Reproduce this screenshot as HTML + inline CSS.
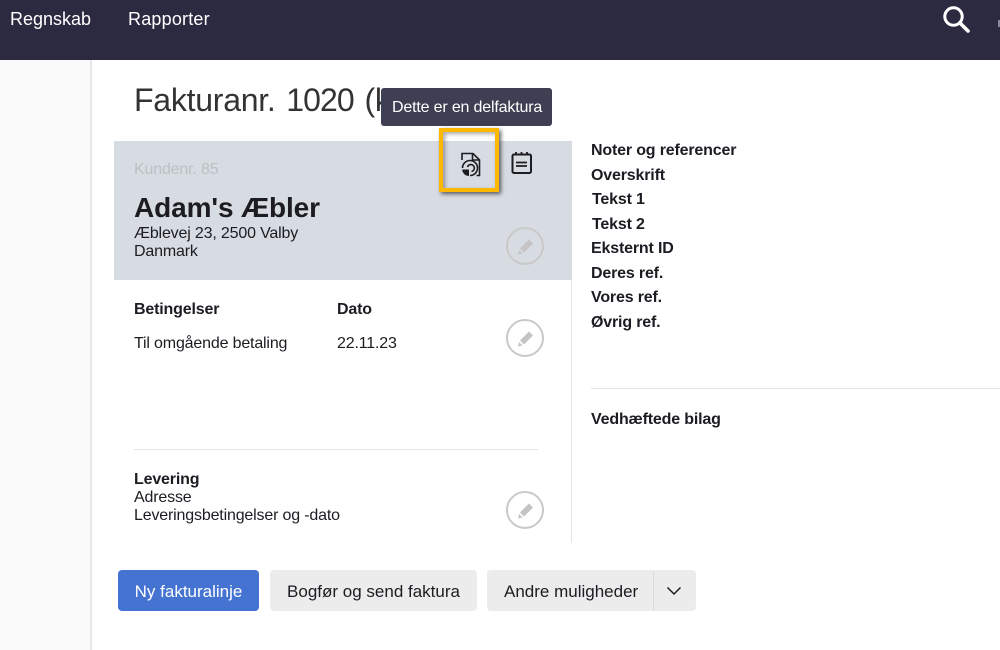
<!DOCTYPE html>
<html><head><meta charset="utf-8"><style>
html,body{margin:0;padding:0;background:#fff}
body{width:1000px;height:650px;overflow:hidden;position:relative;font-family:"Liberation Sans",sans-serif;color:#1c1c22;font-size:16px;letter-spacing:-.17px}
.a{position:absolute;white-space:nowrap;line-height:18px}
.b{font-weight:bold}
.btn{position:absolute;top:570px;height:41px;border-radius:4px;background:#ececec;line-height:43px;text-align:center;font-size:17px;letter-spacing:0}
.pen{position:absolute;border:2px solid #c9c9c9;border-radius:50%;box-sizing:border-box;width:38px;height:38px}
.pen svg{position:absolute;left:0;top:0}
</style></head><body>
<div style="position:absolute;left:0;top:0;width:1000px;height:60px;background:#2c2a40"></div>
<div style="position:absolute;left:0;top:60px;width:90px;height:590px;background:#fafafa;border-right:2px solid #e8e8e8"></div>
<div class="a" style="left:10px;top:10px;color:#fff;font-size:18px;letter-spacing:0">Regnskab</div>
<div class="a" style="left:128px;top:10px;color:#fff;font-size:18px;letter-spacing:.2px">Rapporter</div>
<svg style="position:absolute;left:940px;top:3px" width="32" height="30" viewBox="0 0 32 30"><circle cx="13.500" cy="13.500" r="8.700" fill="none" stroke="#fff" stroke-width="3"/><path d="M20 20L28 28" stroke="#fff" stroke-width="3.600" stroke-linecap="round"/></svg>
<div style="position:absolute;left:998px;top:20px;width:2px;height:7px;background:#8a8896"></div>
<div class="a" style="left:134px;top:80px;font-size:32px;line-height:40px;color:#333;width:247px;overflow:hidden;letter-spacing:-.25px;word-spacing:2px">Fakturanr. <span style="letter-spacing:-.9px">1020</span> (kladde)</div>
<div style="position:absolute;left:114px;top:141px;width:458px;height:139px;background:#d7dbe2"></div>
<div style="position:absolute;left:571px;top:280px;width:1px;height:263px;background:#e4e4e4"></div>
<div class="a" style="left:134px;top:161px;color:#bdbfc3">Kundenr. 85</div>
<div class="a b" style="left:134px;top:192px;font-size:28px;line-height:32px;letter-spacing:-.1px">Adam's Æbler</div>
<div class="a" style="left:134px;top:225px">Æblevej 23, 2500 Valby</div>
<div class="a" style="left:134px;top:243px">Danmark</div>
<div class="pen" style="left:506px;top:227px"><svg width="34" height="34" viewBox="0 0 34 34"><path d="M12 19.500L21 10.500L25 14.500L16 23.500Z" fill="#c4c4c4"/><path d="M11 21L14.500 24.500L10 25.500Z" fill="#c4c4c4"/></svg></div>
<div class="pen" style="left:506px;top:319px"><svg width="34" height="34" viewBox="0 0 34 34"><path d="M12 19.500L21 10.500L25 14.500L16 23.500Z" fill="#c4c4c4"/><path d="M11 21L14.500 24.500L10 25.500Z" fill="#c4c4c4"/></svg></div>
<div class="pen" style="left:506px;top:491px"><svg width="34" height="34" viewBox="0 0 34 34"><path d="M12 19.500L21 10.500L25 14.500L16 23.500Z" fill="#c4c4c4"/><path d="M11 21L14.500 24.500L10 25.500Z" fill="#c4c4c4"/></svg></div>
<div class="a b" style="left:134px;top:301px">Betingelser</div>
<div class="a b" style="left:337px;top:301px">Dato</div>
<div class="a" style="left:134px;top:335px">Til omgående betaling</div>
<div class="a" style="left:337px;top:335px">22.11.23</div>
<div style="position:absolute;left:134px;top:449px;width:404px;height:1px;background:#e4e4e4"></div>
<div class="a b" style="left:134px;top:471px">Levering</div>
<div class="a" style="left:134px;top:489px">Adresse</div>
<div class="a" style="left:134px;top:507px">Leveringsbetingelser og -dato</div>
<div class="a b" style="left:591px;top:142px">Noter og referencer</div>
<div class="a b" style="left:591px;top:167px">Overskrift</div>
<div class="a b" style="left:592px;top:191px">Tekst 1</div>
<div class="a b" style="left:592px;top:216px">Tekst 2</div>
<div class="a b" style="left:591px;top:240px">Eksternt ID</div>
<div class="a b" style="left:591px;top:265px">Deres ref.</div>
<div class="a b" style="left:591px;top:289px">Vores ref.</div>
<div class="a b" style="left:591px;top:314px">Øvrig ref.</div>
<div style="position:absolute;left:591px;top:388px;width:409px;height:1px;background:#e4e4e4"></div>
<div class="a b" style="left:591px;top:411px">Vedhæftede bilag</div>
<div style="position:absolute;left:381px;top:88px;width:171px;height:38px;background:#3f3f54;border-radius:3px"></div>
<div class="a" style="left:392px;top:99px;color:#fff">Dette er en delfaktura</div>
<div style="position:absolute;left:439px;top:128px;width:60px;height:64px;box-sizing:border-box;border:4px solid #ffb800;box-shadow:2px 2px 4px rgba(0,0,0,.6), inset 2px 2px 4px rgba(0,0,0,.35)"></div>
<svg style="position:absolute;left:455px;top:148px" width="32" height="32" viewBox="0 0 32 32" fill="none" stroke="#1c1c22" stroke-width="1.600"><path d="M7 12V5.500H18L24.500 12V27.500H21.500"/><path d="M17.500 5.500V12H24.500"/><path d="M7.500 20A7.500 7.500 0 1 1 15 27.500"/><path d="M12.500 19A3.500 3.500 0 1 1 16.500 23.500"/><path d="M14 21.500V28A6.800 6.800 0 0 1 7.200 21.500Z" fill="#1c1c22" stroke="none"/></svg>
<svg style="position:absolute;left:505px;top:148px" width="32" height="32" viewBox="0 0 32 32" fill="none" stroke="#1c1c22"><rect x="7.500" y="6.500" width="18.500" height="18.500" rx="1.500" stroke-width="2"/><path d="M11 14.500H22M11 18H22" stroke-width="1.700"/><path d="M11 4V7.500M16.500 4V7.500M22 4V7.500" stroke-width="1.800"/></svg>
<div class="btn" style="left:118px;width:141px;background:#4573d2;color:#fff">Ny fakturalinje</div>
<div class="btn" style="left:270px;width:207px">Bogfør og send faktura</div>
<div class="btn" style="left:487px;width:209px;text-align:left"><span style="margin-left:17px">Andre muligheder</span></div>
<div style="position:absolute;left:653px;top:572px;width:1px;height:38px;background:#d9d9d9"></div>
<svg style="position:absolute;left:664px;top:584px" width="20" height="14" viewBox="0 0 20 14"><path d="M3.500 3.500L10 10L16.500 3.500" fill="none" stroke="#1c1c22" stroke-width="1.500"/></svg>
</body></html>
